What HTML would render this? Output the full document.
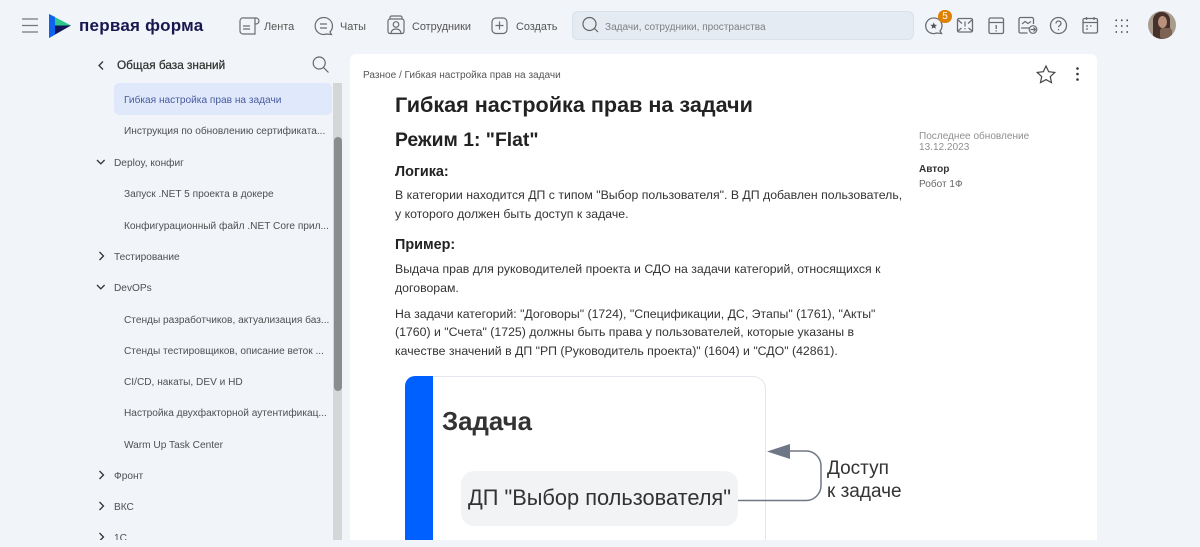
<!DOCTYPE html>
<html lang="ru"><head><meta charset="utf-8"><title>Первая Форма</title>
<style>
html,body{margin:0;padding:0}
html{overflow:hidden;height:547px}
body{width:1200px;height:547px;overflow:hidden;background:#f1f4f8;position:relative;font-family:"Liberation Sans",sans-serif;color:#333}
.t{position:absolute;white-space:nowrap;line-height:16px}
.nav{font-size:10.9px;color:#555;top:19px}
.side{font-size:10.15px;color:#4f5052;margin-top:1px}
.body{font-size:12.3px;color:#333;left:395px;line-height:18px}
.ic{position:absolute;overflow:visible;fill:none;stroke:#6b6e71;stroke-width:1.2}
#card{position:absolute;left:350px;top:54px;width:747px;height:486px;background:#fff;border-radius:6px 6px 0 0}
#clip{position:absolute;left:0;top:0;width:1200px;height:540px;overflow:hidden}
</style></head><body>
<div id="card"></div>

<svg class="ic" style="left:0;top:0" width="1200" height="54" viewBox="0 0 1200 54">
<!-- hamburger -->
<path d="M22 19h16M22 25.500h16M22 32h16" stroke="#777" stroke-width="1.300"/>
<!-- logo -->
<path d="M49 14L71 25.500H49Z" fill="#2dc78c" stroke="none"/>
<path d="M49 25.500H71L49 38Z" fill="#14145a" stroke="none"/>
<path d="M49 14L55 17L55 34.500L49 38Z" fill="#0d63f0" stroke="none"/>
<!-- lenta -->
<path d="M244 18h11v16h-12a3 3 0 0 1-3-3V21M244 18a3 3 0 0 0-4 3M255 18h1a3 3 0 0 1 0 6h-1M243 26h7M243 29h7"/>
<!-- chats -->
<path d="M323.500 17.500a8.500 8.500 0 1 0 3 16.500l5 .5-1.500-2.500a8.500 8.500 0 0 0-6.500-14.500ZM320 24h7M320 28h7"/>
<!-- staff -->
<rect x="388" y="19" width="16" height="14.500" rx="2"/><path d="M390 19v-1.500a1.500 1.500 0 0 1 1.500-1.500h9a1.500 1.500 0 0 1 1.500 1.500V19"/><circle cx="396" cy="24.500" r="2.800"/><path d="M391 33c.5-3 2.500-4 5-4s4.500 1 5 4"/>
<!-- create -->
<rect x="492" y="18" width="15" height="15.500" rx="4"/><path d="M499.500 21.500v8M495.500 25.500h8"/>
</svg>

<div class="t" style="left:79px;top:15px;font-size:17px;font-weight:700;color:#17174f;letter-spacing:.25px;line-height:22px">первая форма</div>
<div class="t nav" style="left:264px">Лента</div>
<div class="t nav" style="left:340px">Чаты</div>
<div class="t nav" style="left:412px">Сотрудники</div>
<div class="t nav" style="left:516px">Создать</div>

<div style="position:absolute;left:572px;top:11px;width:340px;height:27px;background:#e4ebf2;border:1px solid #d9e1e9;border-radius:6px"></div>
<svg class="ic" style="left:582px;top:16px;stroke:#666" width="18" height="18"><circle cx="7.500" cy="8" r="6.500"/><path d="M12.500 12.500l3.500 3.500"/></svg>
<div class="t" style="left:605px;top:20px;font-size:10.050px;color:#7c8085">Задачи, сотрудники, пространства</div>

<svg class="ic" style="left:0;top:0" width="1200" height="54" viewBox="0 0 1200 54">
<!-- fav chat -->
<path d="M933.500 18a7.800 7.800 0 1 0 3 15l5 .5-1.500-2.500a7.800 7.800 0 0 0-6.500-13Z" stroke-width="1.300"/>
<path d="M933.700 22.500l1 2.200 2.300.2-1.700 1.500.5 2.300-2.100-1.200-2.100 1.200.5-2.300-1.700-1.500 2.300-.2Z" fill="#555" stroke="none"/>
<!-- envelope -->
<rect x="957.500" y="18.500" width="15" height="13.500" rx="1.500" stroke-width="1.300"/><path d="M958 20l4 3.500M972 20l-4 3.500M958 31l3.500-3M972 31l-3.500-3M965 21.500v5M965 28v1.300"/>
<!-- archive -->
<rect x="989" y="18" width="14.500" height="15.500" rx="1.500" stroke-width="1.300"/><path d="M989 22.500h14.500M996.200 25v4M996.200 30.300v1.200" stroke-width="1.300"/>
<!-- board arrow -->
<path d="M1033.500 24V19a1.500 1.500 0 0 0-1.500-1.500h-11.500a1.500 1.500 0 0 0-1.500 1.500v12.500a1.500 1.500 0 0 0 1.500 1.500h7" stroke-width="1.300"/><path d="M1022 24l3-2.500 3 2 3-2M1021 28h8"/><circle cx="1033" cy="29.500" r="3.800"/><path d="M1030.500 29.500h5M1033.500 27.500l2 2-2 2"/>
<!-- help -->
<circle cx="1058.500" cy="25.500" r="8" stroke-width="1.300"/><path d="M1056 23.500c0-3.300 5-3.300 5 0 0 2-2.500 2-2.500 3.800M1058.500 29v1.300" stroke-width="1.300"/>
<!-- calendar -->
<rect x="1083" y="18.500" width="14.500" height="14.500" rx="1.500" stroke-width="1.300"/><path d="M1083 22.500h14.500M1086.500 17v3M1094 17v3M1086 26h2M1090 26h1.500M1086 29h2"/>
<!-- grid -->
<path d="M1115.500 20.300h1.500M1121 20.300h1.500M1126.500 20.300h1.500M1115.500 26h1.500M1121 26h1.500M1126.500 26h1.500M1115.500 32h1.500M1121 32h1.500M1126.500 32h1.500" stroke="#444" stroke-width="1.600"/>
</svg>

<div style="position:absolute;left:938px;top:10px;width:14px;height:13px;border-radius:7px;background:#e08000;color:#fff;font-size:10px;line-height:13px;text-align:center">5</div>

<!-- avatar -->
<div style="position:absolute;left:1148px;top:11px;width:28px;height:28px;border-radius:50%;overflow:hidden;background:#a99c8f">
<div style="position:absolute;left:5px;top:1px;width:17px;height:28px;background:#46322a;border-radius:8px 8px 4px 4px"></div>
<div style="position:absolute;left:10px;top:5px;width:9px;height:12px;background:#b9917d;border-radius:50%"></div>
<div style="position:absolute;left:12px;top:17px;width:12px;height:11px;background:#7d6354;border-radius:3px"></div>
</div>

<!-- sidebar head -->
<svg class="ic" style="left:0;top:54px;stroke:#333" width="350" height="30"><path d="M103 7.500l-4 4 4 4" stroke-width="1.300"/></svg>
<div class="t" style="left:117px;top:57px;font-size:11.800px;font-weight:400;color:#333;-webkit-text-stroke:.25px #333">Общая база знаний</div>
<svg class="ic" style="left:312px;top:56px;stroke:#666" width="18" height="18"><circle cx="7.200" cy="7" r="6"/><path d="M11.500 11.500l5 5"/></svg>

<div id="clip">
<div style="position:absolute;left:114px;top:83px;width:218px;height:32px;background:#dfe9fb;border-radius:5px"></div>
<div style="position:absolute;left:333px;top:83px;width:9px;height:457px;background:#d5d6d8"></div>
<div style="position:absolute;left:333.500px;top:137px;width:8px;height:254px;background:#8b8c8d;border-radius:4px"></div>

<div class="t side" style="left:124px;top:92px;color:#4a5aa0">Гибкая настройка прав на задачи</div>
<div class="t side" style="left:124px;top:123px">Инструкция по обновлению сертификата...</div>
<div class="t side" style="left:114px;top:155px">Deploy, конфиг</div>
<div class="t side" style="left:124px;top:186px">Запуск .NET 5 проекта в докере</div>
<div class="t side" style="left:124px;top:218px">Конфигурационный файл .NET Core прил...</div>
<div class="t side" style="left:114px;top:249px">Тестирование</div>
<div class="t side" style="left:114px;top:280px">DevOPs</div>
<div class="t side" style="left:124px;top:312px">Стенды разработчиков, актуализация баз...</div>
<div class="t side" style="left:124px;top:343px">Стенды тестировщиков, описание веток ...</div>
<div class="t side" style="left:124px;top:374px">CI/CD, накаты, DEV и HD</div>
<div class="t side" style="left:124px;top:405px">Настройка двухфакторной аутентификац...</div>
<div class="t side" style="left:124px;top:437px">Warm Up Task Center</div>
<div class="t side" style="left:114px;top:468px">Фронт</div>
<div class="t side" style="left:114px;top:499px">ВКС</div>
<div class="t side" style="left:114px;top:530px">1С</div>

<svg class="ic" style="left:90px;top:150px;stroke:#333" width="24" height="390" viewBox="0 0 24 390">
<path d="M7 10l3.800 3.800L14.600 10M9.500 102l4 4-4 4M7 135l3.800 3.800L14.600 135M9.500 321l4 4-4 4M9.500 352l4 4-4 4M9.500 383l4 4-4 4" stroke-width="1.300"/>
</svg>

<!-- main -->
<div class="t" style="left:363px;top:68px;font-size:10.050px;color:#555">Разное / Гибкая настройка прав на задачи</div>
<div class="t" style="left:395px;top:91px;font-size:21.600px;font-weight:700;color:#222;line-height:28px">Гибкая настройка прав на задачи</div>
<div class="t" style="left:395px;top:127px;font-size:19.350px;font-weight:700;color:#222;line-height:26px">Режим 1: "Flat"</div>
<div class="t" style="left:395px;top:163px;font-size:14.400px;font-weight:700;color:#222;line-height:18px">Логика:</div>
<div class="t body" style="top:186px">В категории находится ДП с типом "Выбор пользователя". В ДП добавлен пользователь,</div>
<div class="t body" style="top:205px">у которого должен быть доступ к задаче.</div>
<div class="t" style="left:395px;top:236px;font-size:14.400px;font-weight:700;color:#222;line-height:18px">Пример:</div>
<div class="t body" style="top:260px">Выдача прав для руководителей проекта и СДО на задачи категорий, относящихся к</div>
<div class="t body" style="top:279px">договорам.</div>
<div class="t body" style="top:305px">На задачи категорий: "Договоры" (1724), "Спецификации, ДС, Этапы" (1761), "Акты"</div>
<div class="t body" style="top:323px">(1760) и "Счета" (1725) должны быть права у пользователей, которые указаны в</div>
<div class="t body" style="top:342px">качестве значений в ДП "РП (Руководитель проекта)" (1604) и "СДО" (42861).</div>

<!-- meta -->
<div class="t" style="left:919px;top:132px;font-size:10.050px;color:#8f8f8f;line-height:10.500px">Последнее обновление<br>13.12.2023</div>
<div class="t" style="left:919px;top:162px;font-size:10.050px;font-weight:700;color:#333">Автор</div>
<div class="t" style="left:919px;top:177px;font-size:10.050px;color:#666">Робот 1Ф</div>

<!-- diagram -->
<div style="position:absolute;left:405px;top:376px;width:361px;height:164px;background:#fff;border:1.500px solid #e3e6ec;border-bottom:0;border-radius:13px 13px 0 0;box-sizing:border-box"></div>
<div style="position:absolute;left:405px;top:376px;width:28px;height:164px;background:#0060ff;border-radius:10px 0 0 0"></div>
<div class="t" style="left:442px;top:407px;font-size:25.800px;font-weight:700;color:#333;line-height:30px">Задача</div>
<div style="position:absolute;left:461px;top:471px;width:277px;height:55px;background:#f2f3f5;border-radius:13px"></div>
<div class="t" style="left:468px;top:484px;font-size:21.800px;color:#333;line-height:28px">ДП "Выбор пользователя"</div>
<svg class="ic" style="left:0;top:0;stroke:#6f7686" width="1200" height="540">
<path d="M738 500.500H806a15 15 0 0 0 15-15V466a15 15 0 0 0-15-15H785" stroke-width="1.500"/>
<path d="M767 451.500L790 444V459Z" fill="#6f7686" stroke="none"/>
</svg>
<div class="t" style="left:827px;top:458px;font-size:19px;color:#333;line-height:22.500px">Доступ<br>к задаче</div>
</div>

<!-- star, more -->
<svg class="ic" style="left:1036px;top:65px;stroke:#444" width="20" height="18"><path d="M10 1l2.700 5.700 6.100.7-4.500 4.200 1.200 6-5.500-3-5.500 3 1.200-6L1.200 7.400l6.100-.7Z" stroke-width="1.200"/></svg>
<svg class="ic" style="left:1070px;top:66px;" width="14" height="16"><circle cx="7.500" cy="2.500" r="1.300" fill="#333" stroke="none"/><circle cx="7.500" cy="8" r="1.300" fill="#333" stroke="none"/><circle cx="7.500" cy="13.500" r="1.300" fill="#333" stroke="none"/></svg>
</body></html>
